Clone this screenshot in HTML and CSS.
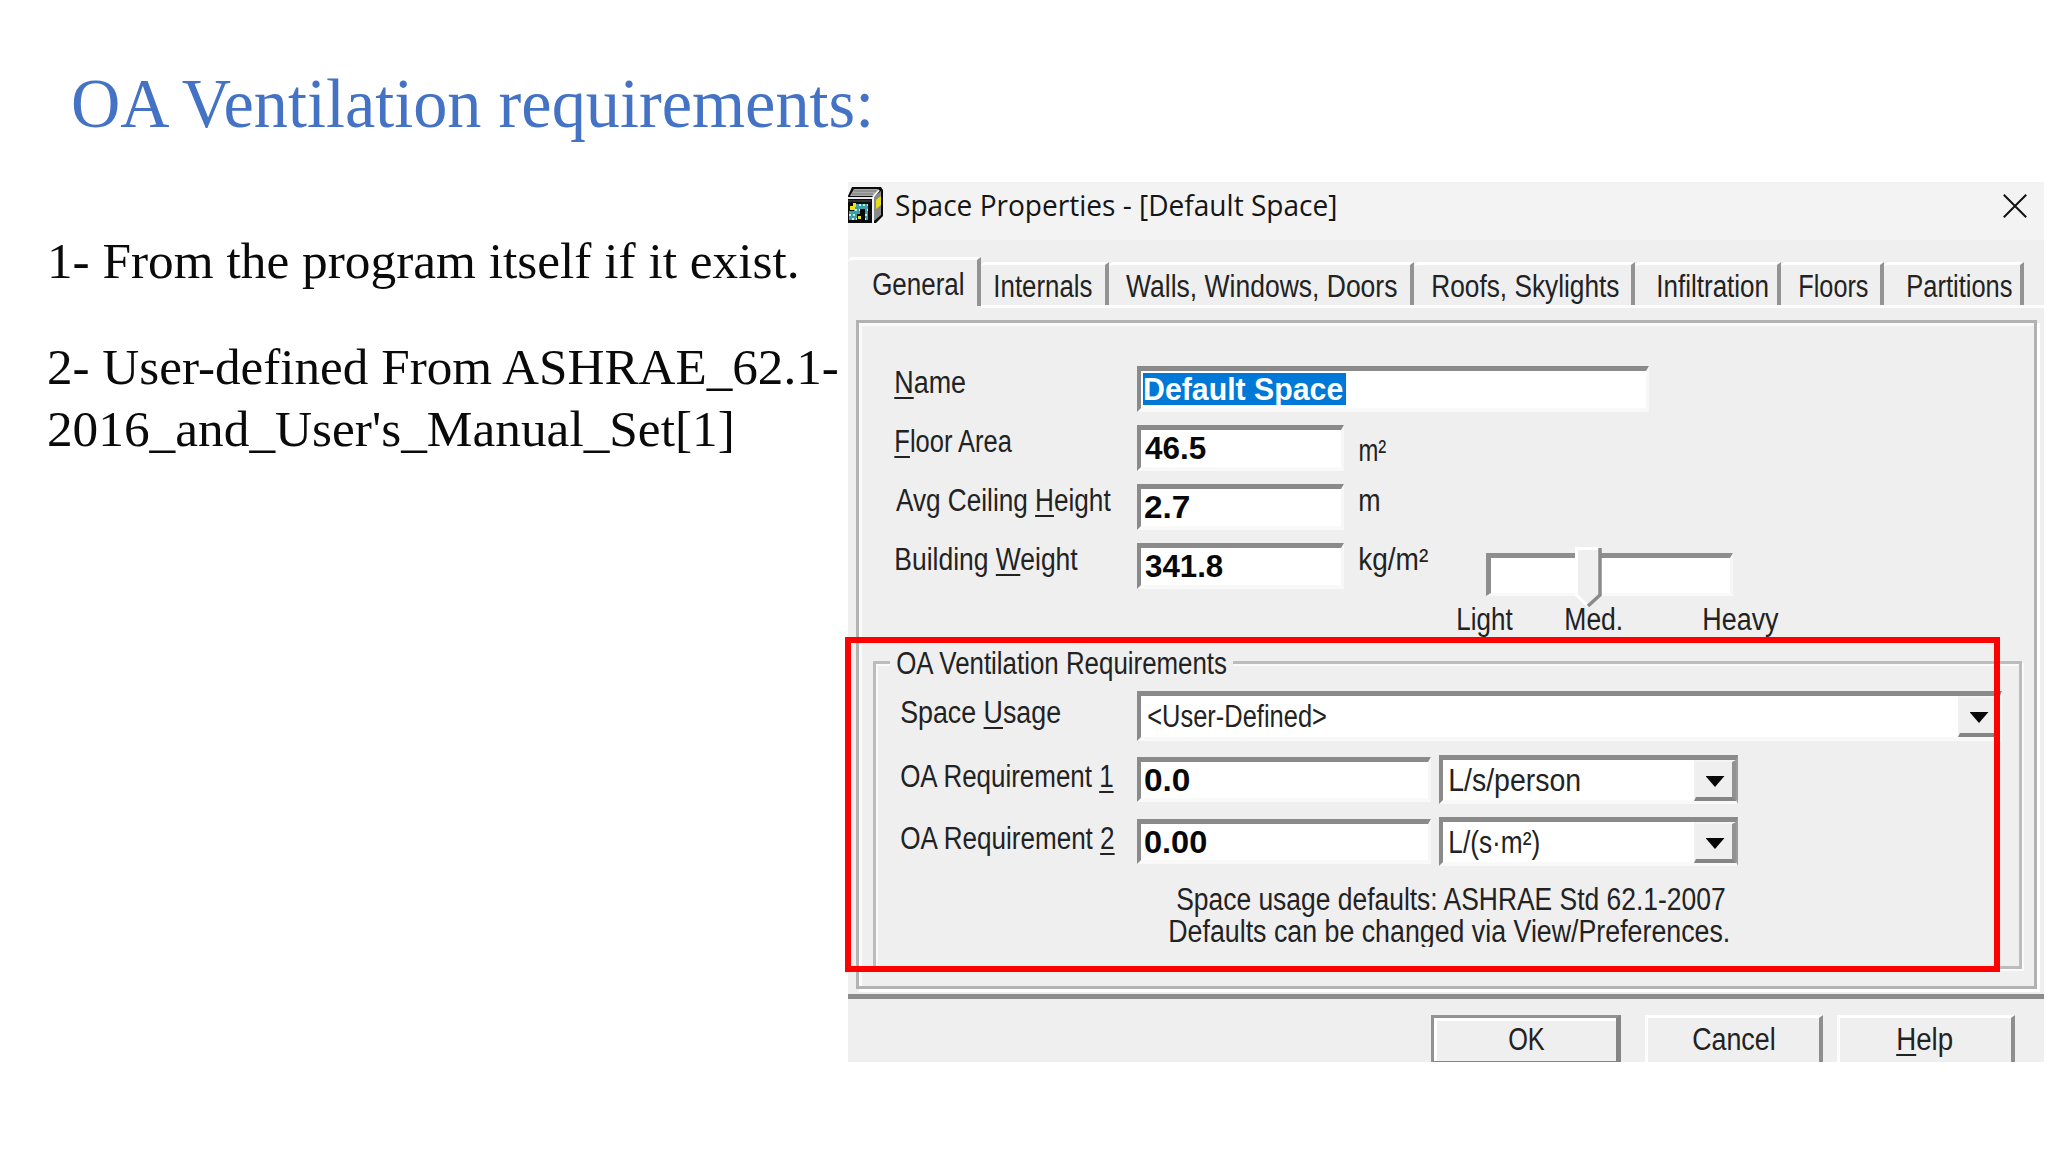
FILE: index.html
```html
<!DOCTYPE html>
<html lang="en">
<head>
<meta charset="utf-8">
<title>OA Ventilation requirements</title>
<link rel="stylesheet" href="styles.css">
</head>
<body>
<main class="slide">
  <h1 class="heading"><span class="fit" data-w="801">OA Ventilation requirements:</span></h1>
  <div class="content">
    <section class="notes">
      <p class="first"><span class="fit" data-w="746">1- From the program itself if it exist.</span></p>
      <p><span class="fit" data-w="791">2- User-defined From ASHRAE_62.1-</span><br><span class="fit" data-w="682">2016_and_User's_Manual_Set[1]</span></p>
    </section>

    <section class="dialog">
      <header class="titlebar">
        <svg class="app-icon" viewBox="0 0 35 36">
          <path d="M4 0H33L35 3V29L28 36H0V9Z" fill="#0a0a0a"/>
          <path d="M6 2H30L25 9H2Z" fill="#aaa"/>
          <path d="M6 4H28M4 7H25" stroke="#777" stroke-width="1"/>
          <path d="M0 11H25" stroke="#e8e8e8" stroke-width="2"/>
          <path d="M0 14H23" stroke="#555" stroke-width="1"/>
          <path d="M26 10L33 4V28L26 34Z" fill="#8a8a8a"/>
          <path d="M25 10V36" stroke="#f4f4f4" stroke-width="2"/>
          <path d="M25 10L31 3" stroke="#f4f4f4" stroke-width="2"/>
          <path d="M28 13L33 9V18L28 22Z" fill="#e4df13"/>
          <path d="M1 17H20V33H1Z" fill="#3f9fa5"/>
          <path d="M1 18H8M11 18H20M3 23H20M1 28H20M4 32H19" stroke="#bceef0" stroke-width="2" stroke-dasharray="2 2"/>
          <path d="M0 17H6V24H0ZM12 22H17V33H9V27H12Z" fill="#080808"/>
          <path d="M2 19H7V23H2ZM5 16H8V20H5ZM10 29H13V32H10Z" fill="#ede51a"/>
        </svg>
        <span class="fit caption" data-w="440">Space Properties - [Default Space]</span>
        <svg class="close" viewBox="0 0 24 24"><path d="M.8.8 23.2 23.2M23.2.8.8 23.2" stroke="#111" stroke-width="2" fill="none"/></svg>
      </header>

      <nav class="tabs">
        <div class="tab active general"><span class="fit" data-w="90">General</span></div>
        <div class="tab internals"><span class="fit" data-w="97">Internals</span></div>
        <div class="tab walls"><span class="fit" data-w="271">Walls, Windows, Doors</span></div>
        <div class="tab roofs"><span class="fit" data-w="186">Roofs, Skylights</span></div>
        <div class="tab infiltration"><span class="fit" data-w="110">Infiltration</span></div>
        <div class="tab floors"><span class="fit" data-w="68">Floors</span></div>
        <div class="tab partitions"><span class="fit" data-w="104">Partitions</span></div>
      </nav>

      <div class="panel">
        <div class="form">
          <div class="row">
            <label><span class="fit" data-w="69"><u>N</u>ame</span></label>
            <div class="input name"><span class="selection"><span class="fit" data-w="198">Default Space</span></span></div>
          </div>
          <div class="row">
            <label><span class="fit" data-w="118"><u>F</u>loor Area</span></label>
            <div class="input"><span class="fit" data-w="61">46.5</span></div>
            <div class="unit low"><span class="fit" data-w="26">m²</span></div>
          </div>
          <div class="row">
            <label><span class="fit" data-w="215">Avg Ceiling <u>H</u>eight</span></label>
            <div class="input"><span class="fit" data-w="44">2.7</span></div>
            <div class="unit"><span class="fit" data-w="19">m</span></div>
          </div>
          <div class="row">
            <label><span class="fit" data-w="182">Building <u>W</u>eight</span></label>
            <div class="input"><span class="fit" data-w="78">341.8</span></div>
            <div class="unit"><span class="fit" data-w="68">kg/m²</span></div>
            <div class="slider">
              <svg class="thumb" viewBox="0 0 27 60">
                <path d="M1 1H25V48L13 59L1 48Z" fill="#efefef"/>
                <path d="M13 59L1.5 48V1.5H24" stroke="#fff" stroke-width="3" fill="none"/>
                <path d="M25 1V48L13 59" stroke="#8a8a8a" stroke-width="3.5" fill="none"/>
              </svg>
            </div>
          </div>
          <div class="scale">
            <span class="fit" data-w="55">Light</span>
            <span class="fit med" data-w="55">Med.</span>
            <span class="fit heavy" data-w="75">Heavy</span>
          </div>
        </div>

        <div class="group">
          <div class="legend"><span class="fit" data-w="331">OA Ventilation Requirements</span></div>
          <div class="group-row usage">
            <label><span class="fit" data-w="159">Space <u>U</u>sage</span></label>
            <div class="combo wide"><span class="fit" data-w="178">&lt;User-Defined&gt;</span><i class="drop"><b></b></i></div>
          </div>
          <div class="group-row">
            <label><span class="fit" data-w="213">OA Requirement <u>1</u></span></label>
            <div class="input amount"><span class="fit" data-w="44">0.0</span></div>
            <div class="combo"><span class="fit" data-w="130">L/s/person</span><i class="drop"><b></b></i></div>
          </div>
          <div class="group-row">
            <label><span class="fit" data-w="214">OA Requirement <u>2</u></span></label>
            <div class="input amount"><span class="fit" data-w="61">0.00</span></div>
            <div class="combo"><span class="fit" data-w="89">L/(s·m²)</span><i class="drop"><b></b></i></div>
          </div>
          <div class="hint">
            <div><span class="fit" data-w="549">Space usage defaults: ASHRAE Std 62.1-2007</span></div>
            <div class="cut"><span class="fit" data-w="558">Defaults can be changed via View/Preferences.</span></div>
          </div>
        </div>
      </div>

      <footer class="actions">
        <div class="button default"><span class="fit" data-w="36">OK</span></div>
        <div class="button cancel"><span class="fit" data-w="81">Cancel</span></div>
        <div class="button help"><span class="fit" data-w="54"><u>H</u>elp</span></div>
      </footer>
    </section>
  </div>
  <div class="highlight"></div>
</main>
<script src="fit.js"></script>
</body>
</html>
```
FILE: styles.css
```css
* { box-sizing: border-box; }

body {
  margin: 0;
  background: #fff;
}

.slide {
  position: relative;
  width: 2048px;
  height: 1152px;
  overflow: hidden;
  font-family: "Liberation Serif", "Times New Roman", serif;
  color: #0a0a0a;
}

.fit {
  display: block;
  flex: none;
  white-space: nowrap;
}

.fit-inner {
  display: inline-block;
  transform-origin: 0 50%;
}

.heading {
  margin: 0;
  height: 182px;
  padding: 64px 0 0 73px;
  font-size: 69px;
  font-weight: 400;
  line-height: 80px;
  color: #4472c4;
}

.content { display: flex; }

.notes {
  width: 848px;
  padding: 48px 0 0 49px;
  font-size: 50px;
  line-height: 62px;
}

.notes p { margin: 0; }
.notes p br { display: none; }
.notes .first { padding-left: 2px; margin-bottom: 44px; }

/* Dialog window */
.dialog {
  width: 1196px;
  height: 880px;
  overflow: hidden;
  background: #efefef;
  color: #222;
  font-family: "Liberation Sans", Arial, sans-serif;
  font-size: 31px;
  line-height: 30px;
}

.titlebar {
  display: flex;
  height: 58px;
  margin-bottom: 17px;
  background: #f3f3f3;
}

.app-icon {
  width: 35px;
  height: 36px;
  margin: 5px 13px 0 0;
}

.caption {
  margin-top: 8px;
  font-family: "Open Sans", "Noto Sans", sans-serif;
  font-size: 29px;
  color: #151515;
}

.close {
  width: 24px;
  height: 24px;
  margin: 12px 17px 0 auto;
}

.tabs {
  display: flex;
  align-items: flex-end;
  height: 51px;
  background: linear-gradient(#fff, #fff) 133px 100% / 100% 3px no-repeat;
}

.tab {
  height: 43px;
  margin-bottom: 3px;
  padding-top: 7px;
  border-top: 3px solid #fff;
  border-right: 4px solid #939393;
  border-top-left-radius: 5px;
}

.tab.active {
  height: 49px;
  margin-bottom: 2px;
  padding-top: 10px;
}

.general { width: 133px; padding-left: 25px; }
.internals { width: 128px; padding-left: 14px; }
.walls { width: 305px; padding-left: 17px; }
.roofs { width: 221px; padding-left: 19px; }
.infiltration { width: 146px; padding-left: 23px; }
.floors { width: 103px; padding-left: 19px; }
.partitions { width: 140px; padding-left: 24px; }

.panel {
  width: 1181px;
  height: 669px;
  margin: 12px 0 0 8px;
  border: 3px solid #b2b2b2;
  box-shadow: 3px 3px 0 #fff, inset 3px 3px 0 #fafafa;
}

.form { padding: 43px 0 0 36px; }

.row {
  display: flex;
  align-items: flex-start;
  height: 59px;
}

.row label {
  width: 242px;
  padding: 2px 0 0 1px;
}

u {
  text-decoration-thickness: 2px;
  text-underline-offset: 4px;
  text-decoration-skip-ink: none;
}

.input,
.combo {
  border-style: solid;
  border-width: 5px 3px 4px 4px;
  border-color: #8a8a8a #f7f7f7 #f9f9f9 #8a8a8a;
  background: #fff;
}

.input {
  width: 207px;
  height: 46px;
  padding: 4px 0 0 4px;
  font-weight: 700;
  color: #080808;
}

.input.name {
  width: 512px;
  padding: 2px 0 0 2px;
}

.selection {
  display: block;
  width: 203px;
  height: 32px;
  padding: 2px 0 0 2px;
  background: #0078d7;
  color: #fff;
}

.unit {
  width: 127px;
  margin-left: 15px;
  padding: 2px 0 0 1px;
}

.unit.low { padding-top: 11px; }

.slider {
  width: 247px;
  height: 43px;
  margin-top: 10px;
  border-style: solid;
  border-width: 5px 3px 3px 5px;
  border-color: #8e8e8e #f7f7f7 #f9f9f9 #8e8e8e;
  background: #fff;
}

.thumb {
  display: block;
  width: 27px;
  height: 60px;
  margin: -11px 0 0 84px;
}

.scale {
  display: flex;
  height: 59px;
  padding: 3px 0 0 563px;
}

.med { margin-left: 53px; }
.heavy { margin-left: 83px; }

.group {
  width: 1149px;
  height: 308px;
  margin-left: 14px;
  border: 3px solid #bcbcbc;
  box-shadow: 2px 2px 0 #fafafa, inset 2px 2px 0 #fafafa;
}

.legend {
  width: 343px;
  margin: -15px 0 12px 14px;
  padding-left: 7px;
  background: #efefef;
}

.group-row {
  display: flex;
  align-items: flex-start;
  height: 62px;
  padding-left: 25px;
}

.group-row.usage { height: 64px; }

.group-row label {
  width: 236px;
  padding-top: 7px;
}

.input.amount {
  width: 294px;
  height: 45px;
  margin: 2px 8px 0 0;
}

.combo {
  display: flex;
  justify-content: space-between;
  width: 299px;
  height: 49px;
  padding-left: 7px;
  border-right: 2px solid #9a9a9a;
}

.combo .fit { padding-top: 6px; }

.combo.wide {
  width: 865px;
  height: 50px;
  padding-left: 7px;
  border-right: 2px solid #f7f7f7;
}

.drop {
  display: flex;
  justify-content: center;
  width: 42px;
  height: 41px;
  padding: 14px 0 0 2px;
  border-style: solid;
  border-width: 2px 4px 4px 2px;
  border-color: #f5f5f5 #929292 #858585 #f0f0f0;
  background: #efefef;
}

.drop b {
  width: 19px;
  height: 11px;
  background: #080808;
  clip-path: polygon(0 0, 100% 0, 50% 100%);
}

.hint { padding: 6px 0 0 294px; }
.hint div { padding-left: 7px; height: 32px; }
.hint .cut { height: 30px; padding-left: 0; overflow: hidden; }

.actions {
  display: flex;
  height: 70px;
  margin-top: 5px;
  padding: 16px 0 0 583px;
  border-top: 5px solid #8c8c8c;
}

.button {
  width: 178px;
  height: 60px;
  padding-top: 7px;
  border-style: solid;
  border-width: 3px 4px 3px 3px;
  border-color: #fff #8e8e8e #8e8e8e #fff;
}

.button.default {
  width: 190px;
  height: 48px;
  padding: 7px 0 0 75px;
  border-width: 3px 5px 2px 3px;
  border-color: #929292 #858585 #858585 #929292;
  box-shadow: inset 3px 3px 0 #fff;
}

.button.cancel {
  margin-left: 24px;
  padding-left: 45px;
}

.button.help {
  margin-left: 14px;
  padding-left: 58px;
}

/* Call-out frame drawn over the dialog */
.highlight {
  position: absolute;
  left: 845px;
  top: 637px;
  width: 1155px;
  height: 335px;
  border: 6px solid #f00;
}
```
FILE: fit.js
```js
// Scales each label horizontally so its glyphs span the width given in data-w.
const ctx = document.createElement('canvas').getContext('2d');
document.querySelectorAll('.fit').forEach(el => {
  const cs = getComputedStyle(el);
  ctx.font = cs.fontWeight + ' ' + cs.fontSize + ' ' + cs.fontFamily;
  const m = ctx.measureText(el.textContent);
  const scale = el.dataset.w / (m.actualBoundingBoxLeft + m.actualBoundingBoxRight);
  const inner = document.createElement('span');
  inner.className = 'fit-inner';
  while (el.firstChild) inner.appendChild(el.firstChild);
  el.appendChild(inner);
  el.style.width = el.dataset.w + 'px';
  inner.style.transform = 'translateX(' + m.actualBoundingBoxLeft * scale + 'px) scaleX(' + scale + ')';
});
```
